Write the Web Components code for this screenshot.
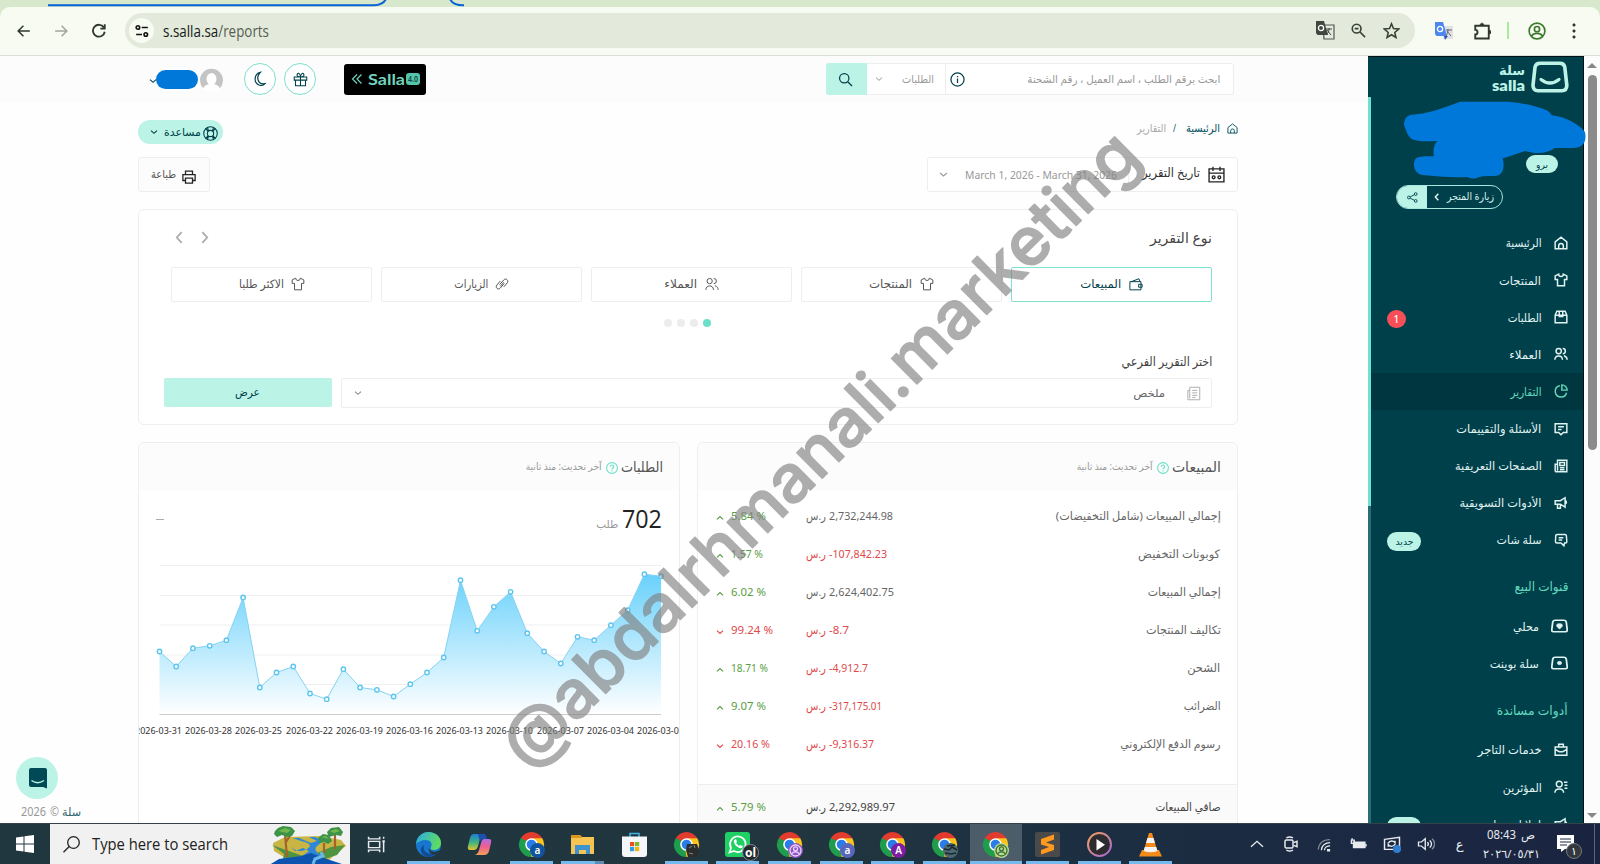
<!DOCTYPE html>
<html lang="ar">
<head>
<meta charset="utf-8">
<title>Salla reports</title>
<style>
html,body{margin:0;height:100%;overflow:hidden;background:#fff;font-family:"Noto Sans","DejaVu Sans",sans-serif}
</style>
</head>
<body>
<app-desktop></app-desktop>
<script>
const FONT='*{box-sizing:border-box}';
const define=(name,css,html,extra)=>{
  customElements.define(name,class extends HTMLElement{
    constructor(){super();this.attachShadow({mode:'open'});}
    connectedCallback(){
      if(this.ready)return;this.ready=true;
      const t=document.createElement('template');
      t.innerHTML='<style>'+FONT+css+'</style>'+(typeof html==='function'?html(this):html);
      this.shadowRoot.append(t.content.cloneNode(true));
      if(extra)extra(this);
    }
  });
};
const at=(e,n,d='')=>e.getAttribute(n)??d;

/* Text squeezed or stretched to a given advance width */
const fits=[];
define('fit-text',':host{display:inline-block;white-space:nowrap;line-height:1.5;flex:none}span{display:inline-block}',
  '<span><slot></slot></span>',e=>{fits.push(e)});
function fitAll(){
  for(const e of fits){
    const w=+at(e,'w'),s=e.shadowRoot.querySelector('span');
    e.style.width=w+'px';
    const n=s.getBoundingClientRect().width;
    if(n){s.style.transformOrigin=(getComputedStyle(e).direction==='rtl'?'right':'left')+' center';s.style.transform='scaleX('+(w/n)+')';}
  }
}

const ICONS={
 home:'<path d="M2 10 12 2l10 8v12H2zM8 22v-5a4 4 0 0 1 8 0v5"/>',
 shirt:'<path d="M8 2 2 5v6h4v11h12V11h4V5l-6-3a4 4 0 0 1-8 0z"/>',
 box:'<path d="M2 9v13h20V9l-3-7H5zM2 9h20M9 2v9h6V2"/>',
 users:'<circle cx="8" cy="7" r="4.500"/><path d="M15 2.500a4.500 4.500 0 0 1 0 9M1.500 22c0-9 13-9 13 0M17 15c4 1 5.500 3.500 5.500 7"/>',
 pie:'<path d="M10 3a9.800 9.800 0 1 0 11.500 12"/><path d="M13.500 1.500v9h9a9 9 0 0 0-9-9z"/>',
 comment:'<path d="M2 3h20v15h-6l-4 4-4-4H2zM7 8h10M7 13h6"/>',
 news:'<path d="M6 2h16v20H4a2 2 0 0 1-2-2V9h4zM6 9v11M10 6h8v5h-8zM10 15h8M10 18.500h8"/>',
 horn:'<path d="M2 8h9l8-5v16l-8-5H2zM6 14v7h5v-7M19 8c3 0 3 5 0 5"/>',
 chat:'<path d="M5 2.500h14q2 0 2.200 2L22 15q0 2-2 2h-2l-1 5-5-5H5q-2.500 0-2.500-2.500L3 4.500q0-2 2-2zM8 8h8M8 12h6"/>',
 bagpin:'<path d="M6 2h12q3 0 3.500 3L23 19q0 3-3 3H4q-3 0-3-3L2.500 5Q3 2 6 2z"/><path d="M12 17c-7-6-4-9 0-9s7 3 0 9z" fill="currentColor" stroke-width="1"/>',
 bagdot:'<path d="M6 2h12q3 0 3.500 3L23 19q0 3-3 3H4q-3 0-3-3L2.500 5Q3 2 6 2z"/><circle cx="12" cy="12" r="3" fill="currentColor" stroke-width="1"/>',
 case:'<path d="M8 7V2h8v5M2 7h20v14H2zM2 11l7 4h6l7-4"/>',
 influence:'<circle cx="9" cy="7" r="5"/><path d="M1.500 22c0-9 15-9 15 0M17 4h6M18 9h5M18 14h5"/>',
 gift:'<path d="M2 8h20v5H2zM4 13h16v9H4zM12 8v14M12 8C8 8 5 6 7 3s5 2 5 5c0-3 3-8 5-5s-1 5-5 5"/>',
 moon:'<path d="M14 2C5 4 3 17 12 21c4 1.500 7 .5 9-2-11 2-14-10-7-17z"/>',
 search:'<circle cx="10" cy="10" r="7.500"/><path d="m15.500 15.500 7 7"/>',
 info:'<circle cx="12" cy="12" r="10.500"/><path d="M12 10.500v7M12 6.500v2"/>',
 chev:'<path d="m3 8 9 8 9-8"/>',
 up:'<path d="m3 16 9-8 9 8"/>',
 left:'<path d="m16 2-9 10 9 10"/>',
 right:'<path d="m8 2 9 10-9 10"/>',
 life:'<circle cx="12" cy="12" r="10.800"/><circle cx="12" cy="12" r="5"/><path d="m4 4 4.500 4.500M20 4l-4.500 4.500M4 20l4.500-4.500M20 20l-4.500-4.500M7 2.500l2 5M17 2.500l-2 5M7 21.500l2-5M17 21.500l-2-5"/>',
 print:'<path d="M6 8V2h12v6M5 18H1.500V8h21v10H19M6 14h12v8.500H6z"/>',
 cal:'<path d="M1.500 4h21v18.500h-21zM1.500 10h21M7 1v6M17 1v6"/><circle cx="8" cy="16" r="2"/><circle cx="16" cy="16" r="2"/>',
 wallet:'<path d="M1.500 8h19v14h-19zM4 8l13-5 2 5M22.500 12.500h-6v5h6z"/>',
 link:'<path d="M8 13 15 5c4-4 9 1 6 5l-6 7M16 11l-7 8c-4 4-9-1-6-5l6-7"/><path d="m9 16 6-7"/>',
 doc:'<path d="M6 2h16v20H3V7h3zM6 7v13M10 7h8M10 11h8M10 15h8M10 18.500h5"/>',
 help:'<circle cx="12" cy="12" r="10.800"/><path d="M8.500 9.500c0-5 7-4.500 7 0 0 2.500-3.500 2.500-3.500 5M12 16.500v2.500"/>',
 share:'<circle cx="4" cy="12" r="3"/><circle cx="19" cy="4.500" r="3"/><circle cx="19" cy="19.500" r="3"/><path d="m7 10.500 9-4.500M7 13.500l9 4.500"/>',
 back:'<path d="M22 12H3M11 3l-9 9 9 9"/>',
 fwd:'<path d="M2 12h19M13 3l9 9-9 9"/>',
 reload:'<path d="M20.500 7A9.500 9.500 0 1 0 22 14M22 2v7h-7"/>',
 tune:'<circle cx="5" cy="6" r="3"/><path d="M11.500 6H22M2 18h10"/><circle cx="18.500" cy="18" r="3"/>',
 zoomout:'<circle cx="9" cy="9" r="7"/><path d="m14 14 8.500 8.500M6 9h6"/>',
 star:'<path d="m12 2.500 2.800 6.800 7.400.6-5.600 4.800 1.700 7.200-6.300-3.900-6.300 3.900 1.700-7.200L1.800 9.900l7.400-.6z"/>',
 puzzle:'<path d="M3 5h18v17H3v-5.500c4 0 4-6 0-6z"/><path d="M9.500 4.500c0-4 5-4 5 0zM21.500 11c3.500 0 3.500 5 0 5z" fill="currentColor" stroke-width="1"/>',
 person:'<circle cx="12" cy="12" r="10.500"/><circle cx="12" cy="9.500" r="3.500"/><path d="M4.500 19c3-5 12-5 15 0"/>',
 dots:'<g fill="currentColor"><circle cx="12" cy="4" r="1.600"/><circle cx="12" cy="12" r="1.600"/><circle cx="12" cy="20" r="1.600"/></g>',
 taskview:'<path d="M2 1v3h14V1M2 23v-3h14v3M2 7.500h14v9H2zM21 1v3M21 8v15" /><path d="M19.500 6h3v3h-3z" fill="currentColor" stroke="none"/>',
 meet:'<rect x="3" y="6" width="12" height="12" rx="2"/><path d="m16 10 5-2v8l-5-2M5 3c3-2 7-2 10 0M5 21c3 2 7 2 10 0"/>',
 wifi:'<path d="M2 20C3 10 10 4 21 4" opacity=".5"/><path d="M7 21c0-7 6-12 14-12M12 21c0-4 4-7 9-7M17 20h3v2h-3z"/>',
 battery:'<path d="M5 8h16v9H5z" fill="currentColor"/><path d="M22.500 11v4M1 5h6M2 5v5h4V5M3 2v3"/>',
 sync:'<path d="m2 5 20-3v18H2z"/><path d="M7 11c2-5 7-4 9-1V7M16 12c-2 5-7 4-9 1v3"/>',
 volume:'<path d="M2 9v6h4l5 5V4L6 9zM14 9c1.500 2 1.500 4 0 6M17 6.500c3 3.500 3 7.500 0 11"/><path d="M20 4c4.500 5 4.500 11 0 16" opacity=".5"/>'
};
define('ui-icon',':host{display:inline-flex;flex:none}svg{display:block}',e=>
 `<svg width="${at(e,'s','14')}" height="${at(e,'h',at(e,'s','14'))}" viewBox="0 0 24 24" preserveAspectRatio="none" fill="none" stroke="currentColor" stroke-width="${at(e,'sw','2')}">${ICONS[at(e,'n')]}</svg>`);

/* Browser toolbar */
define('browser-bar',`
:host{display:block;height:56px;background:#d7e8cd;position:relative;direction:ltr}
.bar{height:49px;margin-top:7px;background:#f7fbf1;border-radius:10px 10px 0 0;border-bottom:1px solid #dcdfd8;display:flex;align-items:flex-start;padding:6px 0 0 17px;color:#30382e}
:host::before{content:"";display:table}
.tabs{position:absolute;left:0;top:0}
.n{height:35px;display:flex;align-items:center}
.omni{height:35px;width:1290px;margin-left:19px;border-radius:18px;background:#e3eadc;display:flex;align-items:center;padding-left:4px;color:#3a4237}
.site{width:25px;height:25px;border-radius:50%;background:#f7fbf1;display:flex;align-items:center;justify-content:center;color:#111}
fit-text{font:15.500px "Open Sans","Noto Sans",sans-serif;margin-left:9px;color:#555e52}
fit-text b{font-weight:400;color:#151a14}
.sep{width:2px;height:17px;background:#a9ea9d}`,`
<svg class="tabs" width="480" height="8" fill="none" stroke="#0b62d6" stroke-width="2"><path d="M48 5.300H374Q383 5 386 -1M450 -1Q453 5.500 464 5.300"/></svg>
<div class="bar">
<div class="n"><ui-icon n="back" s="14" sw="2.600"></ui-icon></div>
<div class="n" style="margin-left:23px;color:#a1a69c"><ui-icon n="fwd" s="14" sw="2.600"></ui-icon></div>
<div class="n" style="margin-left:23px"><ui-icon n="reload" s="15" sw="2.900"></ui-icon></div>
<div class="omni"><span class="site"><ui-icon n="tune" s="14" sw="2.800"></ui-icon></span><fit-text w="106"><b>s.salla.sa</b>/reports</fit-text>
<svg width="19" height="19" viewBox="0 0 19 19" style="margin-left:1047px"><path d="M7 4h11v14H8z" fill="none" stroke="#555" stroke-width="1.200"/><path d="M0 0h8l4 14H1.500L0 12z" fill="#41463f"/><circle cx="5" cy="7" r="2.600" fill="none" stroke="#fff" stroke-width="1.300"/><path d="M10 8h6M13 7v1c0 3-1 4-3 6M11 9l4 5" stroke="#444" fill="none"/></svg>
<ui-icon n="zoomout" s="15" sw="2.600" style="margin-left:16px"></ui-icon><ui-icon n="star" s="17" sw="2.200" style="margin-left:17px"></ui-icon></div>
<div class="n" style="margin-left:20px"><svg width="18" height="18" viewBox="0 0 18 18"><path d="M7 4h11v13H8z" fill="#dfe1e3"/><path d="M0 0h8l4 14H1.500L0 12z" fill="#4d86ef"/><circle cx="5" cy="7" r="2.600" fill="none" stroke="#fff" stroke-width="1.300"/><path d="M9 14h4l-3 4z" fill="#2457c5"/><path d="M11 8h6M13 7v1c0 3-1 4-2 6M12 9l4 5" stroke="#667" fill="none"/></svg></div>
<div class="n" style="margin-left:20px"><ui-icon n="puzzle" s="18" sw="2.500"></ui-icon></div>
<div class="n" style="margin-left:16px"><span class="sep"></span></div>
<div class="n" style="margin-left:19px;color:#3c7a2e"><ui-icon n="person" s="18" sw="2.200"></ui-icon></div>
<div class="n" style="margin-left:19px"><ui-icon n="dots" s="18" sw="1"></ui-icon></div>
</div>`);

/* Store header */
define('store-header',`
:host{display:flex;height:46px;background:#fcfcfd;padding:0 0 0 149px;align-items:center;direction:ltr;color:#00414b}
.pill{width:42px;height:19px;border-radius:10px;background:#0078da;margin-left:-1px}
.round{width:32px;height:32px;border:1px solid #7fdfcd;border-radius:50%;background:#fff;display:flex;align-items:center;justify-content:center}
.salla{margin-left:28px;width:82px;height:31px;border-radius:3px;background:#000;color:#72d3bd;display:flex;align-items:center;padding-left:7px}
.salla b{font:700 15px Lato}.v{background:#54c5ab;color:#10443c;border-radius:3px;width:14px;height:12px;font-size:8px;font-weight:600;display:flex;align-items:center;justify-content:center;margin-left:1px}
.search{margin-left:400px;width:408px;height:32px;border:1px solid #eceeee;border-radius:3px;background:#fff;display:flex;color:#999}
.btn{width:41px;margin:-1px 0 -1px -1px;background:#bbf3e6;color:#00414b;display:flex;align-items:center;justify-content:center;border-radius:3px 0 0 3px}
.dd{width:79px;display:flex;align-items:center;padding-left:8px;border-right:1px solid #eceeee}
.q{flex:1;display:flex;align-items:center;padding-left:4px}`,`
<ui-icon n="chev" s="8" sw="3.500" style="margin-top:4px"></ui-icon><span class="pill"></span>
<svg width="23" height="22" viewBox="0 0 23 22" style="margin-left:2px"><path d="M3 20A11.500 11.500 0 1 1 20 20Z" fill="#c4c4c4"/><ellipse cx="11.500" cy="11" rx="5" ry="6" fill="#fff"/><path d="M3 21c1-4 5-5 8.500-5s7.500 1 8.500 5l-3 1H6z" fill="#fff"/></svg>
<span class="round" style="margin-left:21px"><ui-icon n="moon" s="16" sw="1.800" style="margin-right:2px"></ui-icon></span>
<span class="round" style="margin-left:8px"><ui-icon n="gift" s="15" sw="1.700"></ui-icon></span>
<span class="salla"><svg width="12" height="10" fill="none" stroke="currentColor" stroke-width="1.200"><path d="M6 .5 1.500 5 6 9.500M10.500.5 6 5l4.500 4.500"/></svg><fit-text w="37" style="margin-left:5px"><b>Salla</b></fit-text><span class="v"><fit-text w="10">4.0</fit-text></span></span>
<span class="search"><span class="btn"><ui-icon n="search" s="15" sw="2" style="margin-right:2px"></ui-icon></span><span class="dd"><ui-icon n="chev" s="8" sw="3"></ui-icon><fit-text w="32" style="font-size:11px;margin-left:19px">الطلبات</fit-text></span>
<span class="q"><ui-icon n="info" s="15" sw="2" style="color:#00414b"></ui-icon><fit-text w="193" dir="rtl" style="font-size:11px;margin-left:62px">ابحث برقم الطلب ، اسم العميل ، رقم الشحنة</fit-text></span></span>`);

/* Report type tab */
define('report-tab',`
:host{display:flex;width:201px;height:35px;border:1px solid #eee;border-radius:2px;align-items:center;justify-content:center;gap:7px;direction:rtl;color:#555;font-size:11.500px;background:#fff}
:host([on]){border-color:#7fe3d0;color:#00414b}`,e=>
`<ui-icon n="${at(e,'icon')}" s="14" sw="1.700"></ui-icon><fit-text w="${at(e,'w')}">${at(e,'label')}</fit-text>`);

define('report-panel',`
:host{display:block;height:216px;margin-top:17px;border:1px solid #eee;border-radius:6px;padding:0 25px;direction:rtl;color:#444;background:#fff}
.head{height:54px;margin-bottom:2.500px;display:flex;justify-content:space-between;align-items:center;padding-left:9px}
.arr{direction:ltr;display:flex;gap:12px;color:#aaa}
.tabs{display:flex;gap:9px}
.dots{display:flex;gap:5px;justify-content:center;margin-top:17px;padding-left:24px;padding-right:25px}
.dots i{width:8px;height:8px;border-radius:50%;background:#ececec}.dots i:first-child{background:#6be0c8}
.sub{height:20px;margin:25.500px 0 6px;display:flex;align-items:center}
.row{display:flex;gap:9px;height:30px}
.sel{width:872px;border:1px solid #eee;border-radius:2px;display:flex;align-items:center;padding:0 10px 0 12px;font-size:11px;color:#666}
.go{width:168px;height:29px;background:#bbf3e6;border-radius:2px;display:flex;align-items:center;justify-content:center;font-size:11px;color:#00414b}`,`
<div class="head"><fit-text w="62" style="font-size:14px">نوع التقرير</fit-text><span class="arr"><ui-icon n="left" s="13" sw="3.200"></ui-icon><ui-icon n="right" s="13" sw="3.200"></ui-icon></span></div>
<div class="tabs"><report-tab on icon="wallet" w="41" label="المبيعات"></report-tab><report-tab icon="shirt" w="43" label="المنتجات"></report-tab><report-tab icon="users" w="33" label="العملاء"></report-tab><report-tab icon="link" w="34" label="الزيارات"></report-tab><report-tab icon="shirt" w="45" label="الاكثر طلبا"></report-tab></div>
<div class="dots"><i></i><i></i><i></i><i></i></div>
<div class="sub"><fit-text w="91" style="font-size:12.500px">اختر التقرير الفرعي</fit-text></div>
<div class="row"><span class="sel"><ui-icon n="doc" s="15" sw="1.500" style="color:#aaa"></ui-icon><fit-text w="32" style="margin-right:21px">ملخص</fit-text><ui-icon n="chev" s="8" sw="3" style="margin-right:auto"></ui-icon></span><span class="go"><fit-text w="25">عرض</fit-text></span></div>`);

/* Card with a grey heading strip */
define('data-card',`
:host{display:block;border:1px solid #eee;border-radius:6px 6px 0 0;height:400px;background:#fff;overflow:hidden}
.h{height:47px;background:#fcfcfc;display:flex;align-items:center;direction:rtl;padding:0 16.500px 1px 0;color:#555}`,e=>
`<div class="h"><fit-text w="${at(e,'tw')}" style="font-size:14px">${at(e,'label')}</fit-text><ui-icon n="help" s="12" sw="2.200" style="margin:3px 3px 0 4px;color:#6be0c8"></ui-icon><fit-text w="76" style="font-size:10px;color:#999">آخر تحديث: منذ ثانية</fit-text></div><slot></slot>`);

define('sales-row',`
:host{display:flex;height:38.050px;align-items:center;direction:ltr;padding:0 16.500px 0 18px;color:#666;font-size:11.500px}
:host([total]){height:48px;color:#444;background:#fafafa;border-top:1px solid #eee;padding-bottom:3px}
.p{width:87px;display:flex;align-items:center}.g{color:#5a9e45}.r{color:#e0484a}
.num{margin-left:3px}.lb{margin-left:auto}`,e=>{
 const dn=e.hasAttribute('down'),neg=at(e,'v')[0]==='-';
 return `<span class="p ${dn?'r':'g'}"><ui-icon n="${dn?'chev':'up'}" s="8" sw="3.600" style="margin:4px 7px 0 0"></ui-icon><fit-text w="${at(e,'pw')}">${at(e,'p')} %</fit-text></span>
 <fit-text class="${neg?'r':''}" w="20" style="margin-left:3px">ر.س</fit-text><fit-text class="num ${neg?'r':''}" w="${at(e,'vw')}">${at(e,'v')}</fit-text><fit-text class="lb" w="${at(e,'w')}" dir="rtl">${at(e,'label')}</fit-text>`});

/* Orders area chart */
define('orders-chart',`
:host{display:block;direction:ltr}
.top{height:74px;display:flex;align-items:flex-start;padding:12px 17px 0 17px;justify-content:space-between;color:#222}
.v{display:flex;align-items:baseline;direction:rtl;gap:4px}
.dash{width:8px;height:1px;background:#aaa;margin-top:17px}
svg{display:block}.x{display:flex;margin:6px -30px 0 -4px;font:9.300px "Noto Sans",sans-serif;color:#333}
.x fit-text{margin-right:3.200px}`,()=>{
 const y=[664,709,654,647,630,502,772,727,709,790,807,717,772,779,799,762,727,682,450,602,530,485,609,664,700,620,630,585,540,432,438];
 const p=y.map((v,i)=>[(20.5+i*16.720).toFixed(1),((v-406)/3+1.5).toFixed(1)]);
 const line=p.map(a=>a.join(' ')).join('L');
 const days=[31,28,25,22,19,16,13,10,'07','04','01'];
 return `<div class="top"><span class="dash"></span><span class="v"><fit-text w="40" style="font:25px 'Open Sans';line-height:1.300">702</fit-text><fit-text w="22" style="font-size:11px;color:#999">طلب</fit-text></span></div>
 <svg width="541" height="154"><defs><linearGradient id="g" x1="0" y1="0" x2="0" y2="1"><stop offset="0" stop-color="#69d1fb"/><stop offset="1" stop-color="#fff"/></linearGradient></defs>
 ${[1.500,31.500,61,91,120.500].map(v=>`<path d="M20.500 ${v}H522" stroke="#efefef"/>`).join('')}
 <path d="M20.500 150.500L${line}L522 150.500Z" fill="url(#g)"/><path d="M${line}" fill="none" stroke="#85d3f2" stroke-width="1"/><path d="M20.500 150.500H522" stroke="#ccc"/>
 ${p.map(a=>`<circle cx="${a[0]}" cy="${a[1]}" r="2.200" fill="#fff" stroke="#5ec5ee" stroke-width="1.400"/>`).join('')}</svg>
 <div class="x">${days.map(d=>`<fit-text w="47">2026-03-${d}</fit-text>`).join('')}</div>`});

define('report-page',`
:host{display:block;width:1368px;height:767px;background:#fefefe;direction:ltr;overflow:hidden;position:relative}
.in{width:1100px;margin-left:138px;padding-top:18px}
.r{display:flex;justify-content:space-between}
.help{width:85px;height:24px;border-radius:12px;background:#bbf3e6;color:#00414b;display:flex;align-items:center;padding-left:12px;font-size:11px}
.crumb{display:flex;align-items:center;direction:rtl;font-size:11px;height:17px;color:#00505b}
.print{width:72px;height:35px;border:1px solid #eee;border-radius:3px;background:#fcfcfc;display:flex;align-items:center;padding-left:12px;color:#555;font-size:11px}
.date{width:311px;height:35px;border:1px solid #eee;border-radius:3px;background:#fff;display:flex;align-items:center;padding-left:11px;color:#999;font-size:11.500px}
.cards{display:grid;grid-template-columns:542px 541px;gap:17px;margin-top:17px}
.sales{padding:6.500px 0 0}
.chat{position:absolute;left:16px;top:701px}
.copy{position:absolute;left:21px;top:747px;direction:ltr;display:flex;gap:4px;font-size:12px;color:#999}`,`
<store-header></store-header>
<div class="in">
<div class="r"><span class="help"><ui-icon n="chev" s="8" sw="3.500"></ui-icon><fit-text w="37" style="margin-left:6px">مساعدة</fit-text><ui-icon n="life" s="15" sw="1.700" style="margin:3px 0 0 2px"></ui-icon></span>
<span class="crumb"><ui-icon n="home" s="11" sw="2"></ui-icon><fit-text w="34" style="margin-right:7px">الرئيسية</fit-text><fit-text w="3" style="margin:0 10px 0 7px">/</fit-text><fit-text w="29" style="color:#aaa">التقارير</fit-text></span></div>
<div class="r" style="margin-top:13px"><span class="print"><fit-text w="25">طباعة</fit-text><ui-icon n="print" s="14" sw="2.200" style="margin:4px 0 0 6px;color:#222"></ui-icon></span>
<span class="date"><ui-icon n="chev" s="9" sw="2.800"></ui-icon><fit-text w="152" style="margin-left:17px">March 1, 2026 - March 31, 2026</fit-text><i style="width:1px;height:16px;background:#eee;margin:0 13px 0 11px"></i><fit-text w="58" style="color:#333;font-size:12.500px;margin-bottom:2px">تاريخ التقرير</fit-text><ui-icon n="cal" s="17" sw="1.900" style="margin-left:8px;color:#222"></ui-icon></span></div>
<report-panel></report-panel>
<div class="cards"><data-card label="الطلبات" tw="42"><orders-chart></orders-chart></data-card>
<data-card label="المبيعات" tw="49"><div class="sales">
<sales-row label="إجمالي المبيعات (شامل التخفيضات)" w="165" v="2,732,244.98" vw="64" p="5.84" pw="35"></sales-row>
<sales-row label="كوبونات التخفيض" w="82" v="-107,842.23" vw="58" p="1.57" pw="32"></sales-row>
<sales-row label="إجمالي المبيعات" w="73" v="2,624,402.75" vw="65" p="6.02" pw="35"></sales-row>
<sales-row label="تكاليف المنتجات" w="75" v="-8.7" vw="20" p="99.24" pw="42" down></sales-row>
<sales-row label="الشحن" w="33" v="-4,912.7" vw="39" p="18.71" pw="37"></sales-row>
<sales-row label="الضرائب" w="37" v="-317,175.01" vw="53" p="9.07" pw="35"></sales-row>
<sales-row label="رسوم الدفع الإلكتروني" w="100" v="-9,316.37" vw="45" p="20.16" pw="39" down></sales-row>
<div style="height:21px"></div>
<sales-row total label="صافي المبيعات" w="65" v="2,292,989.97" vw="66" p="5.79" pw="35"></sales-row>
</div></data-card></div>
</div>
<svg class="chat" width="42" height="42"><circle cx="21" cy="21" r="21" fill="#bbf3e6"/><path d="M15 11h14q2 0 2 2v18.500L27 30H15q-2 0-2-2V13q0-2 2-2z" fill="#004956"/><path d="M15.500 23.500q6 4.500 12.500 0" fill="none" stroke="#bbf3e6" stroke-width="1.300"/></svg>
<div class="copy"><fit-text w="25">2026</fit-text><fit-text w="9">©</fit-text><fit-text w="19" style="color:#2d6570;margin-left:-1px">سلة</fit-text></div>`);

/* Sidebar */
define('nav-item',`
:host{display:flex;height:37.100px;align-items:center;direction:rtl;color:#e2f4f2;font-size:11.500px;font-weight:500;padding:0 15px 0 16px}
:host([on]){background:#00363f;color:#61d8bd}
.b{margin-right:auto;position:relative;top:2px;height:19px;border-radius:10px;display:flex;align-items:center;justify-content:center;background:#bbf3e6;color:#00414b;width:34px;font-size:9.500px}
.b.red{width:18.500px;height:18px;background:#f64f58;color:#fff;font-size:10px}`,e=>{
 const w=+at(e,'iw','14');
 return `<ui-icon n="${at(e,'icon')}" s="${w}" h="14" sw="2.500"></ui-icon><fit-text w="${at(e,'w')}" style="margin-right:${at(e,'gap','12.500')}px">${at(e,'label')}</fit-text>${e.hasAttribute('badge')?`<span class="b ${at(e,'badge')==='1'?'red':''}">${at(e,'badge')==='1'?'1':'<fit-text w="18">'+at(e,'badge')+'</fit-text>'}</span>`:''}`});
define('store-sidebar',`
:host{display:block;width:216px;height:767px;background:#00404b;border-right:1px solid #001016;border-top:1px solid #001016;position:relative;direction:ltr}
.edge{position:absolute;left:0;top:40px;width:3px;height:726px;background:linear-gradient(#6fe3cd 0 409px,#2d6b74 409px)}
.col{height:766px;padding-left:3px;overflow:hidden}
.logo{height:98px;display:flex;justify-content:flex-end;padding:4px 14px 0 0;gap:6px;color:#bdf2e7}
.words{width:32px;display:flex;flex-direction:column;align-items:flex-end;font-weight:700}
.pro{height:18px;width:32px;margin-left:155px;border-radius:9px;background:#bbf3e6;color:#00414b;font-size:10px;display:flex;align-items:center;justify-content:center}
.visit{margin:12px 0 15.500px 25px;width:107px;height:24px;border:1px solid #a6e6dc;border-radius:12px;display:flex;align-items:center;overflow:hidden;color:#d9f3ef;font-size:10.500px}
.sh{width:30px;height:24px;background:#bbf3e6;color:#00414b;display:flex;align-items:center;justify-content:center}
.t{color:#61d8bd;font-size:13px;direction:rtl;height:49.500px;display:flex;align-items:center;padding:7px 15px 0 0}
.blob{position:absolute;left:32px;top:39.700px;z-index:2}`,`
<div class="col"><div class="logo"><span class="words"><fit-text w="26" style="font-size:13px;line-height:18px">سلة</fit-text><fit-text w="33" style="font:800 15px/15px Lato,sans-serif;margin-top:-1px">salla</fit-text></span>
<svg width="38" height="32" fill="none" stroke="currentColor"><path d="M9 2.200h20q4 0 4.800 4l2 18q0 5.500-5 5.500H7q-5 0-5-5.500l2-18q.8-4 5-4z" stroke-width="3.600"/><path d="M10 18.500q9 7 18 0" stroke-width="3.200" stroke-linecap="round"/></svg></div>
<div class="pro"><fit-text w="12">برو</fit-text></div>
<div class="visit"><span class="sh"><ui-icon n="share" s="11" sw="2"></ui-icon></span><ui-icon n="left" s="8" sw="4.500" style="margin-left:6px"></ui-icon><fit-text w="47" style="margin-left:6px">زيارة المتجر</fit-text></div>
<nav-item icon="home" w="36" label="الرئيسية"></nav-item><nav-item icon="shirt" w="42" label="المنتجات"></nav-item><nav-item icon="box" w="34" label="الطلبات" badge="1"></nav-item><nav-item icon="users" w="32" label="العملاء"></nav-item><nav-item on icon="pie" w="31" label="التقارير"></nav-item><nav-item icon="comment" w="85" label="الأسئلة والتقييمات"></nav-item><nav-item icon="news" w="87" label="الصفحات التعريفية"></nav-item><nav-item icon="horn" w="82" label="الأدوات التسويقية"></nav-item><nav-item icon="chat" w="45" label="سلة شات" badge="جديد"></nav-item>
<div class="t"><fit-text w="54">قنوات البيع</fit-text></div>
<nav-item icon="bagpin" iw="17" w="26" label="محلي"></nav-item><nav-item icon="bagdot" iw="17" w="49" label="سلة بوينت"></nav-item>
<div class="t"><fit-text w="71">أدوات مساندة</fit-text></div>
<nav-item icon="case" w="64" label="خدمات التاجر"></nav-item><nav-item icon="influence" w="39" label="المؤثرين"></nav-item><nav-item icon="horn" w="54" label="إعلانات سلة" badge="جديد"></nav-item></div>
<span class="edge"></span>
<svg class="blob" width="190" height="83.300" viewBox="420 290 570 250"><path d="M432 375C432 350 445 342 470 342C520 335 550 322 600 304H745C790 308 830 318 860 330Q870 335 876 345C920 350 960 375 975 395C982 430 965 443 940 443L885 443C860 460 830 462 795 452C770 460 750 468 728 474C735 500 730 528 700 527C670 527 660 528 650 533Q635 538 622 530C570 532 530 528 488 524C460 520 455 485 470 472C490 466 510 468 522 468C518 450 522 432 532 422C500 424 470 424 455 416C440 405 440 392 432 375Z" fill="#0078da"/></svg>`);
define('scroll-bar',`:host{display:flex;flex-direction:column;width:16px;height:767px;background:#fcfcfc;align-items:center;padding:7px 0 5px}i{width:9px;height:375px;border-radius:5px;background:#8b8b8b;margin:7px 0 auto}svg{display:block}`,
 '<svg width="10" height="5"><path d="M0 5 5 0l5 5z" fill="#888"/></svg><i></i><svg width="10" height="5"><path d="M0 0h10L5 5z" fill="#888"/></svg>');

/* Taskbar */
const CH='<path d="M12.500 12.500 1.700 6.200A12.500 12.500 0 0 1 23.300 6.200Z" fill="#e33b2e"/><path d="M12.500 12.500 23.300 6.200A12.500 12.500 0 0 1 12.500 25Z" fill="#fcc31e"/><path d="M12.500 12.500V25A12.500 12.500 0 0 1 1.700 6.200Z" fill="#1f9d4d"/><path d="M12.500 6.200H23.300L18 12.500z" fill="#fcc31e"/><path d="m7 15.600L1.700 6.200l7 3z" fill="#1f9d4d"/><path d="M18 15.600 12.500 25l-1-6z" fill="#fcc31e"/><circle cx="12.500" cy="12.500" r="6.300" fill="#fff"/><circle cx="12.500" cy="12.500" r="4.800" fill="#2a7de9"/>';
const badge=(c,t)=>`<circle cx="18.500" cy="18.500" r="7.500" fill="${c}"/>`+(t||'');
const letter=t=>`<text x="18.500" y="22" font-size="10" font-weight="600" fill="#fff" text-anchor="middle" font-family="Noto Sans">${t}</text>`;
const face=c=>`<g fill="none" stroke="${c}" stroke-width="1.300"><circle cx="18.500" cy="18.500" r="5.500"/><circle cx="18.500" cy="16.800" r="2"/><path d="M14.500 22c2-3 6-3 8 0"/></g>`;
const APPS={
 edge:'<defs><linearGradient id="a" x1="0" y1="0" x2="1" y2=".3"><stop offset="0" stop-color="#29a9e9"/><stop offset="1" stop-color="#5edb62"/></linearGradient></defs><circle cx="12.500" cy="12.500" r="12.500" fill="#1976cf"/><path d="M0 12C1 3 8 0 12.500 0 20 0 25 5 25 11c0 5-4 7-7 7-3 0-4-1-3-3 2-4-1-7-5-7-5 0-8 2-10 4z" fill="url(#a)"/><path d="M8 13c-2 7 5 11 14 7-3 4-7 5-10 5-7-1-10-9-4-12z" fill="#124c92"/><path d="M24 18c-5 3-10 2-11-2-1 3 2 8 8 6z" fill="#223741"/>',
 copilot:'<defs><linearGradient id="c" x1="0" y1="0" x2="0" y2="1"><stop offset="0" stop-color="#1a7fd9"/><stop offset=".55" stop-color="#43b57b"/><stop offset="1" stop-color="#e4c42e"/></linearGradient><linearGradient id="d" x1="0" y1="0" x2="0" y2="1"><stop offset="0" stop-color="#b06be0"/><stop offset=".5" stop-color="#ef5f8f"/><stop offset="1" stop-color="#f7a055"/></linearGradient></defs><path d="M7 2h10q-3 1-4 5l-2 7q-1 4-4 4H3q-3 0-2-4l2-8q1-4 4-4z" fill="url(#c)"/><path d="M17 7h5q3 0 2 4l-2 8q-1 4-5 4H8q3-1 4-5l2-7q1-4 3-4z" fill="url(#d)"/><path d="M11 2h6q2 0 3 5h-4q-2 0-3 3z" fill="#1c4fae"/>',
 files:'<path d="M1 3h9l2 2h12v17H1z" fill="#f6c453"/><path d="M1 3h9l2 3H1z" fill="#d9971c"/><path d="M5 22v-9h15v9h-4v-4H9v4z" fill="#3c93cf"/>',
 store:'<path d="M8 5V1.500h9V5" fill="none" stroke="#43b5e6" stroke-width="1.500"/><path d="M0 4.500h25V22q0 3-3 3H3q-3 0-3-3z" fill="#f5f7f8"/><path d="M8 10h4.200v4.200H8z" fill="#e8502a"/><path d="M13 10h4.200v4.200H13z" fill="#7db928"/><path d="M8 15h4.200v4.200H8z" fill="#2b9fe2"/><path d="M13 15h4.200v4.200H13z" fill="#f7b514"/>',
 c1:CH+badge('#0f549c',letter('a')),
 c2:CH+'<path d="M13 12h10l2 6-2 7h-9l-2-7z" fill="#2b2c2c"/><path d="M15 16l3-2M20 13l1 3M15 21l4 1" stroke="#888" fill="none"/>',
 wa:'<rect width="25" height="25" rx="3" fill="#1fd065"/><path d="M4.500 20.500 6 16a7.800 7.800 0 1 1 3 3z" fill="none" stroke="#fff" stroke-width="1.700"/><path d="M9 8c-1 4 4 9 8 8l1-2-3-1-1 1-3-3 1-1-1-3z" fill="#fff"/><circle cx="25.500" cy="20.500" r="8" fill="#222a2c" stroke="#889"/><text x="25.500" y="25" font-size="12" font-weight="700" fill="#fff" text-anchor="middle" font-family="Noto Sans">ol</text>',
 c3:CH+badge('#8e55c4',face('#e9d3fb')),
 c4:CH+badge('#5767bd',letter('a')),
 c5:CH+badge('#7b1ea2',letter('A')),
 c6:CH+badge('#4d6870','<path d="M12 17l5 1 3-3 5 3M13 21l6 1 5-1M15 14l8-1" stroke="#18282e" stroke-width="1.500" fill="none"/>'),
 c7:CH+badge('#b6d99b',face('#3f7029')),
 sublime:'<rect width="25" height="25" rx="2" fill="#4a4a4a"/><path d="M19 4v5l-8 3 8 2.500v5L6 24v-4.500l8-3L6 14V8.500z" fill="#ff9a1e" transform="translate(0 -1.500)"/>',
 media:'<defs><linearGradient id="m" x1="0" y1="0" x2="1" y2="1"><stop offset="0" stop-color="#f5a05e"/><stop offset="1" stop-color="#a566d6"/></linearGradient></defs><circle cx="12.500" cy="12.500" r="11.500" fill="#2c2b30" stroke="url(#m)" stroke-width="2"/><path d="M9.500 7v11.500l8.500-5.800z" fill="#fff"/>',
 vlc:'<path d="M4 18h17l3 6.500H1z" fill="#f28b1a"/><path d="M11 1h3l6 20q-7 3-15 0z" fill="#f58a1b"/><path d="M9.500 6h6l1.500 5H8zM6.800 15h11.500l1.200 4q-7 2.500-13.800 0z" fill="#f4f4f4"/>'
};
define('task-app',`:host{display:flex;width:51.640px;height:41px;flex-direction:column;align-items:center;flex:none;padding-top:8px}
:host([active]){background:#4c5c68}svg{overflow:visible;display:block;flex:none}
i{display:block;width:43px;height:3px;background:#76b9ed;margin-top:4px;flex:none}:host([active]) i{width:51.640px}:host([none]) i{display:none}
:host([multi]) i{background:linear-gradient(90deg,#76b9ed 34px,#5d8cb4 34px)}`,e=>`<svg width="25" height="25" viewBox="0 0 25 25">${APPS[at(e,'n')]}</svg><i></i>`);
define('task-bar',`
:host{display:flex;height:41px;background:linear-gradient(90deg,#20373f 0,#21363f 50%,#1c2f42 68%,#1b2742 90%,#1a2440);direction:ltr;color:#e8ecef;position:relative;border-top:1px solid #34434a}
.start{width:50px;display:flex;align-items:center;justify-content:center}
.s{width:300px;background:#f1f1f1;display:flex;align-items:center;padding-left:13px;color:#222}
.tv{width:52.200px;display:flex;align-items:center;justify-content:center}
.tray{margin-left:64px;display:flex;align-items:center}.tray>*{width:33.700px;justify-content:center;display:flex}
.clock{width:70px;margin-left:0;display:flex;flex-direction:column;align-items:center;font-size:12px;padding-top:1px}
.clock div{display:flex;gap:5px;height:19px;align-items:center}
.nt{margin:10px 0 0 11px}
.end{width:1px;background:#5a647a;margin-left:10px}`,`
<span class="start"><svg width="18" height="18" viewBox="0 0 18 18" fill="#fff"><path d="M0 2.500 7.500 1.500V8.500H0zM8.500 1.300 18 0v8.500H8.500zM0 9.500h7.500v7L0 15.500zM8.500 9.500H18V18l-9.500-1.300z"/></svg></span>
<span class="s"><svg width="17" height="17" fill="none" stroke="#222" stroke-width="1.300"><circle cx="10.500" cy="6.500" r="5.800"/><path d="M6.200 10.500.5 16.300"/></svg><fit-text w="136" style="font:15.500px 'Open Sans';margin-left:12px">Type here to search</fit-text>
<svg width="75" height="38" viewBox="0 0 75 38" style="margin:2px 0 0 43px"><path d="M2 17 14 11 50 10 70 14 75 20 66 27 58 34 16 33 3 25z" fill="#c9b544"/><path d="M1 19l12 9-1 5 20-3M46 27l14-6 14-2-8 10-12 4z" fill="#4f9440"/><path d="M20 21q8 7 16 2T30 15l-8-3h6l12 5 6-2-8-4h6l8 4-6 5q-5 4 4 9l6 9H0l10-5 20-2 8-6-6-3-8 3z" fill="#2d86d8"/><path d="M0 38 8 33 30 30 40 27 53 32 71 38z" fill="#0d54b0"/><path d="M42 38l2-5 8-3-2-4" stroke="#6ab8e8" stroke-width="3" fill="none"/><path d="M14 8l2 23M15 16l5-8M64 8v15M53 17v10" stroke="#a5622c" stroke-width="2.200" fill="none"/><path d="M4 5l3-3 5-2 8 1 4 4-3 5-5 1-5-2-5 2-3-3zM56 6l4-4 8-1 4 5-2 4-5-1-7 2zM47 12l5-4 6 1 3 6-4 3-4-2-4 1z" fill="#3d9347"/><path d="M7 5l7-3 6 2-4 3zM59 5l6-2 4 2-6 2zM50 11l5-1 3 3z" fill="#70b84e"/></svg></span>
<span class="tv"><ui-icon n="taskview" s="19" h="17" sw="1.900"></ui-icon></span>
<task-app n="edge"></task-app><task-app n="copilot" none></task-app><task-app n="c1"></task-app><task-app n="files" multi></task-app><task-app n="store" none></task-app><task-app n="c2"></task-app><task-app n="wa"></task-app><task-app n="c3"></task-app><task-app n="c4"></task-app><task-app n="c5"></task-app><task-app n="c6"></task-app><task-app n="c7" active></task-app><task-app n="sublime"></task-app><task-app n="media"></task-app><task-app n="vlc"></task-app>
<span class="tray"><span><ui-icon n="up" s="16" sw="2"></ui-icon></span><span><ui-icon n="meet" s="16" sw="2.200"></ui-icon></span><span><ui-icon n="wifi" s="15" sw="2"></ui-icon></span><span><ui-icon n="battery" s="17" h="15" sw="2"></ui-icon></span><span style="position:relative"><ui-icon n="sync" s="18" h="16" sw="1.900"></ui-icon><svg width="8" height="8" style="position:absolute;left:18px;top:9px"><circle cx="4" cy="4" r="4" fill="#2f7cd0"/></svg></span><span><ui-icon n="volume" s="18" h="16" sw="1.800"></ui-icon></span><span style="font-size:13px">ع</span></span>
<span class="clock"><div><fit-text w="29">08:43</fit-text><fit-text w="14">ص</fit-text></div><div><fit-text w="57" style="font-size:11.500px"><bdo dir="ltr">٢٠٢٦/٠٥/٣١</bdo></fit-text></div></span>
<svg class="nt" width="27" height="27"><path d="M0 1h17v14H8l-4 3v-3H0z" fill="#fff"/><path d="M3 5h11M3 8h11M3 11h7" stroke="#1b2742"/><circle cx="17" cy="17" r="7.500" fill="#33383f" stroke="#777"/><text x="17" y="21" font-size="11" fill="#fff" text-anchor="middle" font-family="DejaVu Sans">١</text></svg><span class="end"></span>`);

define('water-mark',`:host{position:absolute;left:0;top:0;width:1600px;height:864px;z-index:5;pointer-events:none}svg{display:block}`,
`<svg width="1600" height="864"><g transform="translate(528 771) rotate(-44.850)" opacity=".64"><text x="0" y="0" font-size="66" font-weight="500" font-family="Inter" textLength="868" lengthAdjust="spacingAndGlyphs" fill="#808080" stroke="#808080" stroke-width="1.500" stroke-linejoin="round" direction="ltr">@abdalrhmanali.marketing</text></g></svg>`);

define('app-desktop',`
:host{display:grid;grid-template-rows:56px 767px 41px;width:1600px;height:864px;overflow:hidden;position:relative;direction:ltr}
.mid{display:flex;overflow:hidden}store-sidebar{flex:none;z-index:2}`,`
<browser-bar></browser-bar><div class="mid"><report-page></report-page><store-sidebar></store-sidebar><scroll-bar></scroll-bar></div><task-bar></task-bar><water-mark></water-mark>`);
fitAll();
</script>
</body>
</html>
